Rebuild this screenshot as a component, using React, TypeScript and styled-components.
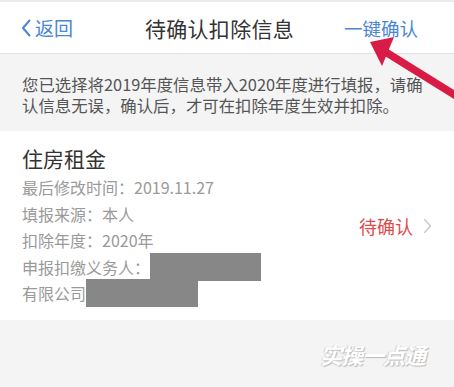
import React from 'react';
import styled, {createGlobalStyle} from 'styled-components';

const GlobalStyle = createGlobalStyle`
  html, body {
    margin: 0;
    padding: 0;
    background: #ffffff;
  }
  body {
    font-family: 'Noto Sans CJK SC', 'Noto Sans', sans-serif;
  }
`;

const details: {label: string; value?: string; redact?: number}[] = [
    {label: '最后修改时间：', value: '2019.11.27'},
    {label: '填报来源：', value: '本人'},
    {label: '扣除年度：', value: '2020年'},
    {label: '申报扣缴义务人：', redact: 111},
    {label: '有限公司', redact: 112},
];

const App: React.FC = () => {
    return (
        <Page>
            <GlobalStyle/>
            <Header>
                <BackLink>
                    <svg width="10" height="18" viewBox="0 0 10 18">
                        <path d="M8.5 1.5 L2 9 L8.5 16.5" fill="none" stroke="#4a86d2" strokeWidth="2"
                              strokeLinecap="round" strokeLinejoin="round"/>
                    </svg>
                    <span>返回</span>
                </BackLink>
                <HeaderTitle>待确认扣除信息</HeaderTitle>
                <HeaderAction>一键确认</HeaderAction>
            </Header>

            <Notice>
                您已选择将2019年度信息带入2020年度进行填报，请确<br/>
                认信息无误，确认后，才可在扣除年度生效并扣除。
            </Notice>

            <Card>
                <CardBody>
                    <CardTitle>住房租金</CardTitle>
                    {details.map((d) => (
                        <DetailRow key={d.label}>
                            {d.label}
                            {d.value}
                            {d.redact && <Redacted $width={d.redact}/>}
                        </DetailRow>
                    ))}
                </CardBody>
                <Status>
                    待确认
                    <svg width="9" height="16" viewBox="0 0 9 16">
                        <path d="M1.5 1.5 L7.5 8 L1.5 14.5" fill="none" stroke="#c8c8c8" strokeWidth="1.4"
                              strokeLinecap="round" strokeLinejoin="round"/>
                    </svg>
                </Status>
            </Card>

            <Filler/>

            {/* red pointer drawn over the screenshot */}
            <Arrow width="100" height="80" viewBox="0 0 100 80">
                <path d="M24 26 L98 72" stroke="#d81c45" strokeWidth="7.5"/>
                <polygon points="10,17 34,12 22,41" fill="#d81c45"/>
            </Arrow>

            <Watermark>实操一点通</Watermark>
        </Page>
    );
};

export default App;

const Page = styled.div`
  position: relative;
  width: 454px;
  height: 387px;
  overflow: hidden;
  display: flex;
  flex-direction: column;
  background: #f4f4f5;
`

const Header = styled.div`
  display: grid;
  grid-template-columns: 1fr auto 1fr;
  align-items: center;
  height: 51px;
  padding: 0 36px 0 21px;
  background: #ffffff;
  border-top: 2px solid #ebebeb;
  border-bottom: 1px solid #e2e2e2;
`

const BackLink = styled.div`
  display: flex;
  align-items: center;
  gap: 4px;
  font-size: 19px;
  color: #4a86d2;
  justify-self: start;
`

const HeaderTitle = styled.div`
  font-size: 21px;
  color: #333333;
  letter-spacing: 0.3px;
`

const HeaderAction = styled.div`
  justify-self: end;
  font-size: 18.5px;
  color: #4a86d2;
`

const Notice = styled.div`
  padding: 20px 0 15px 22px;
  font-size: 16.4px;
  line-height: 21px;
  color: #555555;
  white-space: nowrap;
  background: #f4f4f5;
`

const Card = styled.div`
  display: flex;
  align-items: center;
  justify-content: space-between;
  padding: 13px 22px 13px 22px;
  background: #ffffff;
`

const CardBody = styled.div`
  display: flex;
  flex-direction: column;
`

const CardTitle = styled.div`
  font-size: 21px;
  line-height: 28px;
  color: #333333;
  margin-bottom: 2px;
`

const DetailRow = styled.div`
  display: flex;
  align-items: center;
  height: 26.5px;
  font-size: 16px;
  color: #9a9a9a;
  white-space: nowrap;
`

const Redacted = styled.span<{ $width: number }>`
  display: inline-block;
  width: ${({$width}) => $width}px;
  height: 28px;
  background: #878787;
`

const Status = styled.div`
  display: flex;
  align-items: center;
  gap: 10px;
  font-size: 18px;
  color: #e04a4a;
  margin-top: 2px;
`

const Filler = styled.div`
  flex: 1;
  background: #f4f4f5;
`

const Arrow = styled.svg`
  position: absolute;
  left: 360px;
  top: 25px;
`

const Watermark = styled.div`
  position: absolute;
  left: 320px;
  top: 338px;
  font-size: 22px;
  font-weight: 700;
  font-style: italic;
  letter-spacing: -1px;
  color: #ffffff;
  text-shadow: 1px 1px 1px #b8b8b8, -1px 0 1px #d0d0d0;
`
